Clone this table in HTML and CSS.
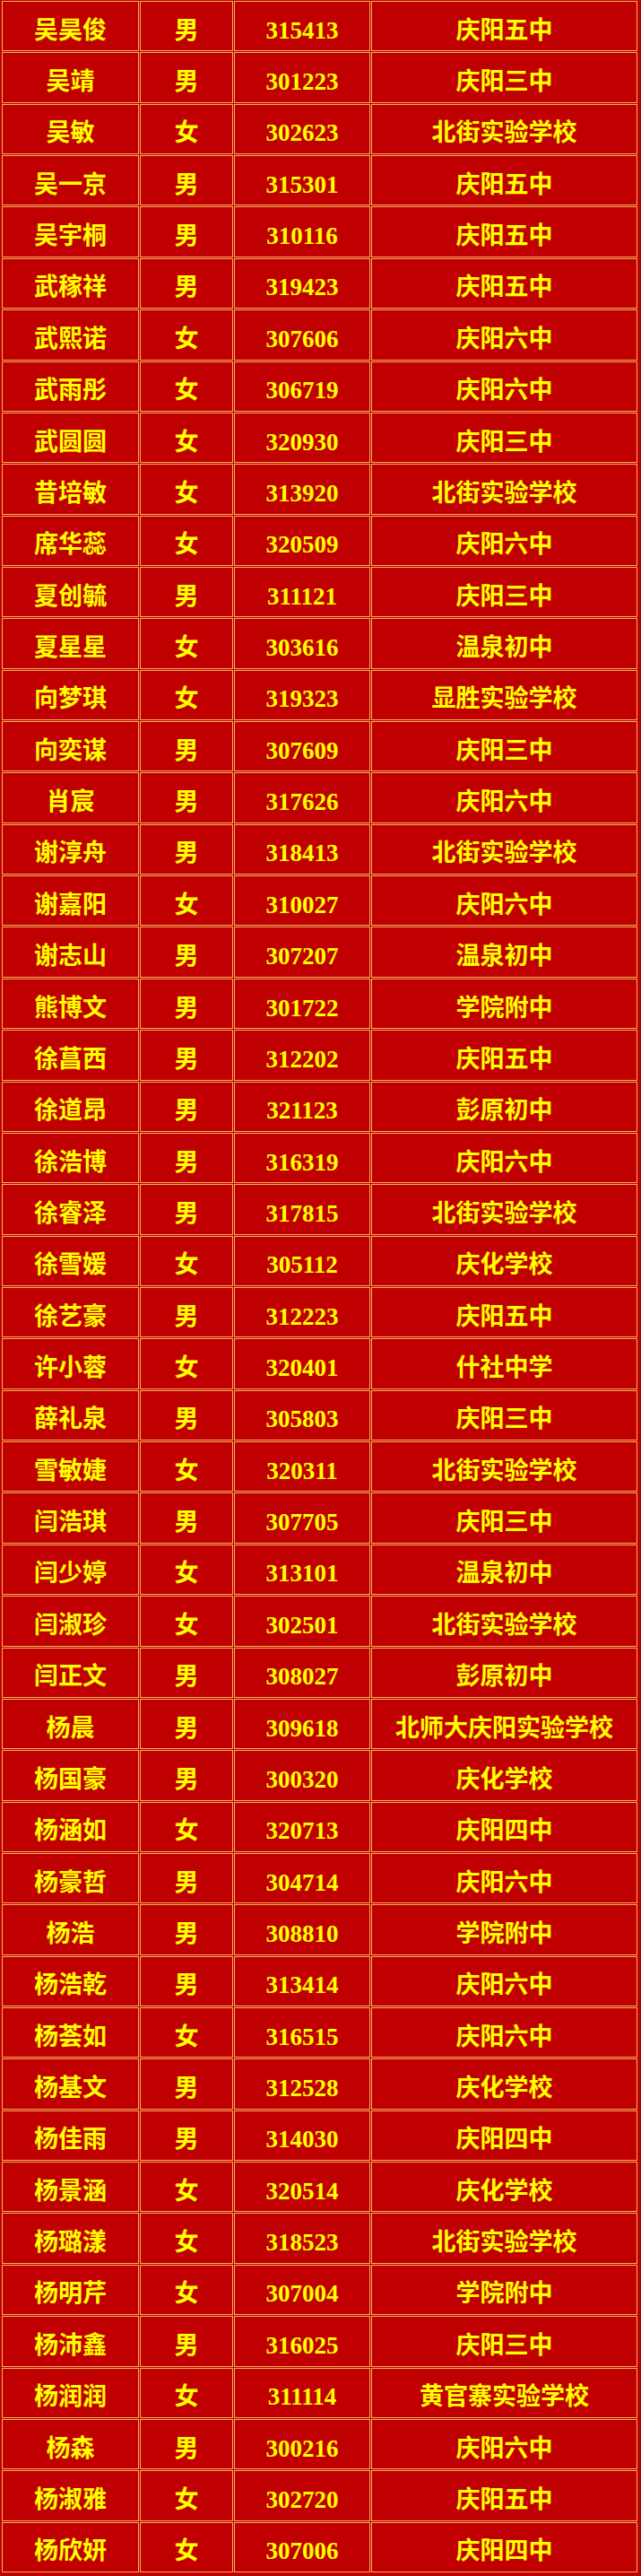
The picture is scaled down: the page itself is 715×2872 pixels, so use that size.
FILE: index.html
```html
<!DOCTYPE html>
<html lang="zh-CN">
<head>
<meta charset="utf-8">
<title>名单</title>
<link rel="stylesheet" href="styles.css">
</head>
<body>
<table class="roster">
<colgroup><col class="c-name"><col class="c-sex"><col class="c-id"><col class="c-school"></colgroup>
<tbody>
<tr><td>吴昊俊</td><td>男</td><td>315413</td><td>庆阳五中</td></tr>
<tr><td>吴靖</td><td>男</td><td>301223</td><td>庆阳三中</td></tr>
<tr><td>吴敏</td><td>女</td><td>302623</td><td>北街实验学校</td></tr>
<tr><td>吴一京</td><td>男</td><td>315301</td><td>庆阳五中</td></tr>
<tr><td>吴宇桐</td><td>男</td><td>310116</td><td>庆阳五中</td></tr>
<tr><td>武稼祥</td><td>男</td><td>319423</td><td>庆阳五中</td></tr>
<tr><td>武熙诺</td><td>女</td><td>307606</td><td>庆阳六中</td></tr>
<tr><td>武雨彤</td><td>女</td><td>306719</td><td>庆阳六中</td></tr>
<tr><td>武圆圆</td><td>女</td><td>320930</td><td>庆阳三中</td></tr>
<tr><td>昔培敏</td><td>女</td><td>313920</td><td>北街实验学校</td></tr>
<tr><td>席华蕊</td><td>女</td><td>320509</td><td>庆阳六中</td></tr>
<tr><td>夏创毓</td><td>男</td><td>311121</td><td>庆阳三中</td></tr>
<tr><td>夏星星</td><td>女</td><td>303616</td><td>温泉初中</td></tr>
<tr><td>向梦琪</td><td>女</td><td>319323</td><td>显胜实验学校</td></tr>
<tr><td>向奕谋</td><td>男</td><td>307609</td><td>庆阳三中</td></tr>
<tr><td>肖宸</td><td>男</td><td>317626</td><td>庆阳六中</td></tr>
<tr><td>谢淳舟</td><td>男</td><td>318413</td><td>北街实验学校</td></tr>
<tr><td>谢嘉阳</td><td>女</td><td>310027</td><td>庆阳六中</td></tr>
<tr><td>谢志山</td><td>男</td><td>307207</td><td>温泉初中</td></tr>
<tr><td>熊博文</td><td>男</td><td>301722</td><td>学院附中</td></tr>
<tr><td>徐菖西</td><td>男</td><td>312202</td><td>庆阳五中</td></tr>
<tr><td>徐道昂</td><td>男</td><td>321123</td><td>彭原初中</td></tr>
<tr><td>徐浩博</td><td>男</td><td>316319</td><td>庆阳六中</td></tr>
<tr><td>徐睿泽</td><td>男</td><td>317815</td><td>北街实验学校</td></tr>
<tr><td>徐雪媛</td><td>女</td><td>305112</td><td>庆化学校</td></tr>
<tr><td>徐艺豪</td><td>男</td><td>312223</td><td>庆阳五中</td></tr>
<tr><td>许小蓉</td><td>女</td><td>320401</td><td>什社中学</td></tr>
<tr><td>薛礼泉</td><td>男</td><td>305803</td><td>庆阳三中</td></tr>
<tr><td>雪敏婕</td><td>女</td><td>320311</td><td>北街实验学校</td></tr>
<tr><td>闫浩琪</td><td>男</td><td>307705</td><td>庆阳三中</td></tr>
<tr><td>闫少婷</td><td>女</td><td>313101</td><td>温泉初中</td></tr>
<tr><td>闫淑珍</td><td>女</td><td>302501</td><td>北街实验学校</td></tr>
<tr><td>闫正文</td><td>男</td><td>308027</td><td>彭原初中</td></tr>
<tr><td>杨晨</td><td>男</td><td>309618</td><td>北师大庆阳实验学校</td></tr>
<tr><td>杨国豪</td><td>男</td><td>300320</td><td>庆化学校</td></tr>
<tr><td>杨涵如</td><td>女</td><td>320713</td><td>庆阳四中</td></tr>
<tr><td>杨豪哲</td><td>男</td><td>304714</td><td>庆阳六中</td></tr>
<tr><td>杨浩</td><td>男</td><td>308810</td><td>学院附中</td></tr>
<tr><td>杨浩乾</td><td>男</td><td>313414</td><td>庆阳六中</td></tr>
<tr><td>杨荟如</td><td>女</td><td>316515</td><td>庆阳六中</td></tr>
<tr><td>杨基文</td><td>男</td><td>312528</td><td>庆化学校</td></tr>
<tr><td>杨佳雨</td><td>男</td><td>314030</td><td>庆阳四中</td></tr>
<tr><td>杨景涵</td><td>女</td><td>320514</td><td>庆化学校</td></tr>
<tr><td>杨璐漾</td><td>女</td><td>318523</td><td>北街实验学校</td></tr>
<tr><td>杨明芹</td><td>女</td><td>307004</td><td>学院附中</td></tr>
<tr><td>杨沛鑫</td><td>男</td><td>316025</td><td>庆阳三中</td></tr>
<tr><td>杨润润</td><td>女</td><td>311114</td><td>黄官寨实验学校</td></tr>
<tr><td>杨森</td><td>男</td><td>300216</td><td>庆阳六中</td></tr>
<tr><td>杨淑雅</td><td>女</td><td>302720</td><td>庆阳五中</td></tr>
<tr><td>杨欣妍</td><td>女</td><td>307006</td><td>庆阳四中</td></tr>
</tbody>
</table>
</body>
</html>
```

FILE: styles.css
```css
html, body {
  margin: 0;
  padding: 0;
  background: #c00000;
}

.roster {
  margin: 0 0 0 1px;
  width: 711px;
  table-layout: fixed;
  border-collapse: separate;
  border-spacing: 1px;
  font-family: "Liberation Serif", "Noto Sans CJK SC", serif;
  font-weight: bold;
  font-size: 27px;
  line-height: 36px;
  color: #ffff00;
}

.c-name { width: 153px; }
.c-sex { width: 104px; }
.c-id { width: 152px; }
.c-school { width: 297px; }

.roster td {
  box-sizing: border-box;
  height: 56.37px;
  padding: 9px 0 0;
  border: 1px solid #f2b15a;
  text-align: center;
  vertical-align: middle;
  white-space: nowrap;
  overflow: hidden;
}
```
